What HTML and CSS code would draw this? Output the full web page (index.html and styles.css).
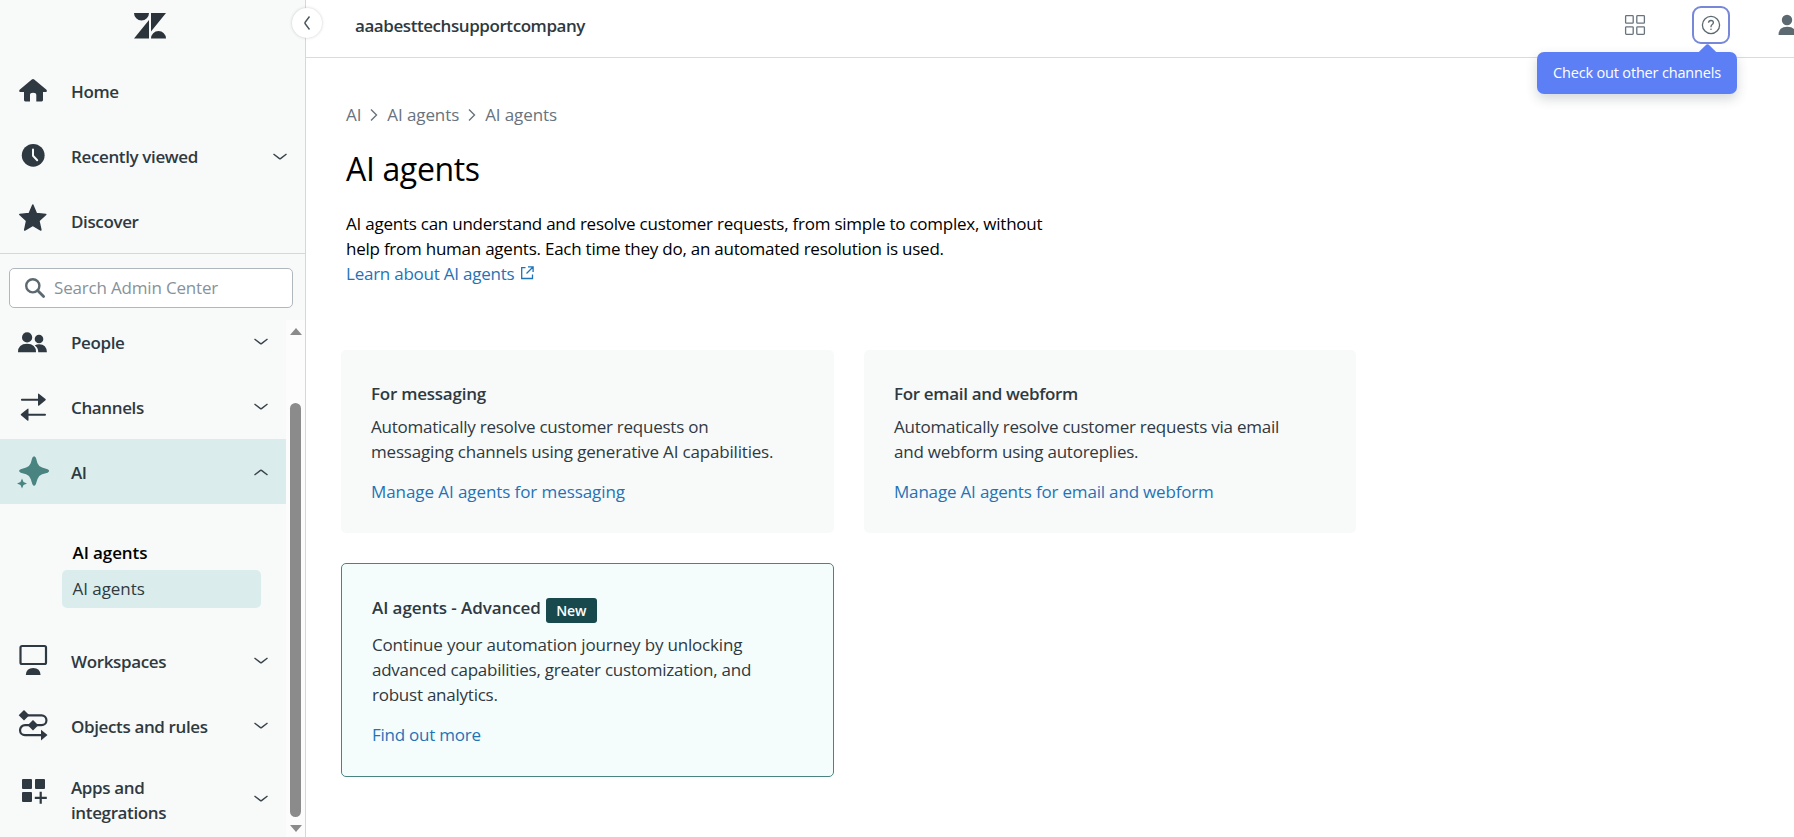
FILE: index.html
```html
<!DOCTYPE html>
<html lang="en">
<head>
<meta charset="utf-8">
<title>AI agents</title>
<link rel="stylesheet" href="styles.css">
</head>
<body>
<div class="app">
  <aside class="sidebar">
    <div class="brand">
      <svg width="34" height="26" viewBox="0 0 34 26" fill="#2b343a"><path d="M1 0h15a7.5 7.5 0 0 1-15 0zM16 7v18.500H1zM18 0h15L18 18.500zM18 25.500a7.500 7.500 0 0 1 15 0z"/></svg>
    </div>
    <nav class="top-nav">
      <a class="row"><svg class="icon" viewBox="0 0 32 33"><path d="M14.800 4.500q1.200-1 2.400 0l12.300 10.300q1 1.200-.2 2.300H26v8q0 1.400-1.300 1.400H19.300V20q0-2.300-3.200-2.300T13 20v6.500H8.300Q7 26.500 7 25.100v-8H2.800q-1.300-1.100-.2-2.300z"/></svg><span class="label">Home</span></a>
      <a class="row"><svg class="icon" viewBox="0 0 32 33"><circle cx="16.200" cy="15.300" r="11.400"/><path d="M16 9.500v6.300l4.200 4.400" fill="none" stroke="#f8faf9" stroke-width="2" stroke-linecap="round" stroke-linejoin="round"/></svg><span class="label">Recently viewed</span><svg class="chev" viewBox="0 0 16 10"><path d="M1.500 2l6 4.600q.5.400 1 0l6-4.600"/></svg></a>
      <a class="row"><svg class="icon" viewBox="0 0 32 33"><path d="M15.800 0l3.600 8.500 9.400 1-6.900 6.300 2 9.200-8.100-4.700L7.700 25l1.900-9.200-6.800-6.300 9.400-1z" stroke="#2f3941" stroke-width="1.500" stroke-linejoin="round"/></svg><span class="label">Discover</span></a>
    </nav>
    <div class="search">
      <svg width="22" height="22" viewBox="0 0 22 22" fill="none" stroke="#5c6970"><circle cx="8.800" cy="8.800" r="6.600" stroke-width="2.400"/><path d="M13.600 13.600l6 6" stroke-width="2.800" stroke-linecap="round"/></svg>
      <span class="placeholder">Search Admin Center</span>
    </div>
    <div class="scroller">
      <nav class="nav">
        <a class="row row-low"><svg class="icon" viewBox="0 0 32 33"><circle cx="10.100" cy="12.400" r="5.100"/><circle cx="22" cy="14" r="4.300"/><path d="M1 27.300q0-8.500 9-8.500t9 8.500zM17.700 20.500q2-1.200 4.500-1.200 7.400 0 7.700 8H21.300q0-4.500-3.600-6.800z"/></svg><span class="label">People</span><svg class="chev" viewBox="0 0 16 10"><path d="M1.500 2l6 4.600q.5.400 1 0l6-4.600"/></svg></a>
        <a class="row row-low"><svg class="icon" viewBox="0 0 32 33"><path d="M4.900 9.700H23M28 24.700H10" fill="none" stroke="#2f3941" stroke-width="2" stroke-linecap="round"/><path d="M21 4.300q0-1.300 1.200-.4l6.300 5.200q.6.600 0 1.200l-6.300 5.200q-1.200.900-1.200-.4zM11.500 19.300q0-1.300-1.200-.4L4 24.100q-.6.600 0 1.200l6.300 5.200q1.200.900 1.200-.4z"/></svg><span class="label">Channels</span><svg class="chev" viewBox="0 0 16 10"><path d="M1.500 2l6 4.600q.5.400 1 0l6-4.600"/></svg></a>
        <a class="row row-low row-active"><svg class="icon icon-ai" viewBox="0 0 32 33"><path d="M15.300 2.800q1.800-3.200 3.600 0l1.600 5.400q1.300 3.300 4.600 4.400l5.500 1.700q3 1.700 0 3.400l-5.500 1.600q-3.300 1.200-4.600 4.600l-1.700 5.400q-1.700 3-3.400 0l-1.700-5.400q-1.200-3.400-4.600-4.600l-5.400-1.600q-3.200-1.700 0-3.400l5.400-1.700q3.400-1.200 4.600-4.400zM5 23.500l1.500 3.500 3.500 1.500L6.500 30 5 33.500 3.500 30 0 28.500 3.500 27z"/></svg><span class="label">AI</span><svg class="chev" viewBox="0 0 16 10"><path d="M1.500 8l6-4.600q.5-.4 1 0l6 4.600"/></svg></a>
        <div class="subnav">
          <div class="sub-title">AI agents</div>
          <div class="sub-item">AI agents</div>
        </div>
        <a class="row row-low"><svg class="icon" viewBox="0 0 32 33"><rect x="3.500" y="2" width="25.500" height="18" rx="1.500" fill="none" stroke="#2f3941" stroke-width="2.200"/><path d="M8.800 31q.4-7 7.400-7t7.400 7z"/></svg><span class="label">Workspaces</span><svg class="chev" viewBox="0 0 16 10"><path d="M1.500 2l6 4.600q.5.400 1 0l6-4.600"/></svg></a>
        <a class="row row-low"><svg class="icon" viewBox="0 0 32 33"><path d="M7 6.300h17.500a4.900 4.900 0 0 1 0 9.900H8a4.900 4.900 0 0 0 0 9.900h16" fill="none" stroke="#2f3941" stroke-width="2.200"/><path d="M7 1l5.300 5.300L7 11.600 1.700 6.300zM16 10.900l5.300 5.300-5.300 5.300-5.300-5.300zM24 20.800l6.500 5.300-6.500 5.300z"/></svg><span class="label">Objects and rules</span><svg class="chev" viewBox="0 0 16 10"><path d="M1.500 2l6 4.600q.5.400 1 0l6-4.600"/></svg></a>
        <a class="row row-tall"><svg class="icon" viewBox="0 0 32 33"><rect x="5" y="5" width="10" height="10" rx="1"/><rect x="18" y="5" width="10" height="10" rx="1"/><rect x="5" y="18" width="10" height="10" rx="1"/><path d="M23.700 17.800v12M17.800 23.800h12" fill="none" stroke="#2f3941" stroke-width="2.200"/></svg><span class="label">Apps and<br>integrations</span><svg class="chev" viewBox="0 0 16 10"><path d="M1.500 2l6 4.600q.5.400 1 0l6-4.600"/></svg></a>
      </nav>
      <div class="scrollbar"><i class="arrow-up"></i><i class="thumb"></i><i class="arrow-down"></i></div>
    </div>
    <div class="collapse"><svg width="10" height="16" viewBox="0 0 10 16"><path d="M7.500 1.500L3 7.500q-.3.500 0 1l4.500 6" fill="none" stroke="#49545c" stroke-width="1.400"/></svg></div>
  </aside>
  <main class="main">
    <header class="header">
      <span class="account">aaabesttechsupportcompany</span>
      <div class="tools">
        <svg class="grid" width="22" height="22" viewBox="0 0 22 22" fill="none" stroke="#68737d" stroke-width="1.300"><rect x="1.600" y="1.600" width="7.600" height="7.600" rx=".8"/><rect x="12.800" y="1.600" width="7.600" height="7.600" rx=".8"/><rect x="1.600" y="12.800" width="7.600" height="7.600" rx=".8"/><rect x="12.800" y="12.800" width="7.600" height="7.600" rx=".8"/></svg>
        <div class="help">
          <svg width="20" height="20" viewBox="0 0 20 20" fill="none" stroke="#5c6970" stroke-width="1.300"><circle cx="10" cy="10" r="8.600"/><path d="M7.500 7.800q.2-2.300 2.500-2.300t2.400 2.100q0 1.200-1.200 1.900T10 11.700v.5" stroke-width="1.300"/><circle cx="10" cy="14.200" r=".8" fill="#5c6970" stroke="none"/></svg>
          <div class="tooltip">Check out other channels</div>
        </div>
        <svg class="user" width="17" height="22" viewBox="0 0 17 22" fill="#5c6970"><circle cx="10" cy="6" r="5.200"/><path d="M1.500 21q0-8.300 8.700-8.300T19 21z"/></svg>
      </div>
    </header>
    <section class="content">
      <div class="crumbs"><span>AI</span><svg viewBox="0 0 8 14"><path d="M1 1.500L6.500 7 1 12.500"/></svg><span>AI agents</span><svg viewBox="0 0 8 14"><path d="M1 1.500L6.500 7 1 12.500"/></svg><span>AI agents</span></div>
      <h1>AI agents</h1>
      <p class="intro">AI agents can understand and resolve customer requests, from simple to complex, without<br>help from human agents. Each time they do, an automated resolution is used.<br><a class="link">Learn about AI agents</a><svg class="ext" viewBox="0 0 14 14"><path d="M5.500 1.700H1.700v10.800h10.800V8.500M8 .900h5.100V6M13 1L6.500 7.500"/></svg></p>
      <div class="cards">
        <article class="card">
          <h2>For messaging</h2>
          <p>Automatically resolve customer requests on<br><span class="loose">messaging channels using generative AI capabilities.</span></p>
          <a class="link looser">Manage AI agents for messaging</a>
        </article>
        <article class="card">
          <h2 class="tight">For email and webform</h2>
          <p>Automatically resolve customer requests via email<br>and webform using autoreplies.</p>
          <a class="link loose">Manage AI agents for email and webform</a>
        </article>
        <article class="card card-adv">
          <h2 class="looser">AI agents - Advanced<span class="badge">New</span></h2>
          <p><span class="loose">Continue your automation journey by unlocking</span><br>advanced capabilities, greater customization, and<br>robust analytics.</p>
          <a class="link">Find out more</a>
        </article>
      </div>
    </section>
  </main>
</div>
</body>
</html>
```

FILE: styles.css
```css
* { box-sizing: border-box; }
body {
  margin: 0;
  background: #fff;
  color: #2f3941;
  font-family: "Open Sans", "Noto Sans", sans-serif;
  font-size: 17px;
  line-height: 25px;
  white-space: nowrap;
}
.app { display: flex; width: 1794px; height: 837px; overflow: hidden; }
h1, h2, p { margin: 0; font-weight: 400; }

.sidebar {
  position: relative;
  flex: none;
  display: flex;
  flex-direction: column;
  width: 306px;
  background: #f8faf9;
  border-right: 1px solid #d3d8da;
}
.brand { flex: none; height: 59px; padding: 12.5px 0 0 133px; }
.brand svg { display: block; }
.top-nav { flex: none; height: 195px; border-bottom: 1px solid #d3d8da; }
.row { display: flex; align-items: center; height: 65px; padding-left: 17px; }
.icon { flex: none; width: 32px; height: 33px; margin-right: 22px; fill: #2f3941; overflow: visible; }
.icon-ai { fill: #4a8481; }
.label { flex: 1; font-weight: 600; letter-spacing: -.37px; }
.row-low .label { padding-top: 2px; }
.chev { flex: none; width: 16px; height: 10px; margin-right: 17px; fill: none; stroke: #39434b; stroke-width: 1.4; }
.search {
  flex: none;
  display: flex;
  align-items: center;
  gap: 8px;
  width: 284px;
  height: 40px;
  margin: 14px 0 0 9px;
  padding-left: 14px;
  background: #fff;
  border: 1px solid #b0b8be;
  border-radius: 5px;
  color: #87929a;
  letter-spacing: -.18px;
}
.placeholder { padding-bottom: 1px; }
.scroller { flex: none; display: flex; height: 517px; margin-top: 12px; overflow: hidden; }
.nav { flex: none; width: 286px; margin-top: -11px; }
.row-active { background: #daedec; }
.row-tall { height: 84px; }
.row-tall .icon { align-self: flex-start; margin-top: 16px; }
.row-tall .chev { margin-bottom: 3px; }
.subnav { height: 124px; padding: 36px 25px 0 62px; }
.sub-title { padding-left: 10.5px; color: #000; font-weight: 600; height: 30px; letter-spacing: -.1px; }
.sub-item { height: 38px; padding: 6px 10.5px; border-radius: 5px; background: #daedec; letter-spacing: -.05px; }
.scrollbar { flex: none; display: flex; flex-direction: column; align-items: center; width: 19px; background: #fcfcfc; }
.arrow-up { margin-top: 8px; border: 6.5px solid transparent; border-top: 0; border-bottom: 7px solid #8b8b8b; }
.thumb { width: 11px; height: 414px; margin-top: 68px; border-radius: 6px; background: #8b8b8b; }
.arrow-down { margin-top: 8px; border: 6.5px solid transparent; border-bottom: 0; border-top: 7px solid #8b8b8b; }
.collapse {
  position: absolute;
  left: 292px;
  top: 8px;
  z-index: 2;
  display: flex;
  align-items: center;
  justify-content: center;
  width: 30px;
  height: 30px;
  border-radius: 50%;
  background: #fff;
  box-shadow: 0 0 3px rgba(47, 57, 65, .25);
}

.main { flex: 1; min-width: 0; }
.header { display: flex; justify-content: space-between; height: 58px; border-bottom: 1px solid #d8dcde; padding-left: 49px; }
.account { margin-top: 13px; font-weight: 600; letter-spacing: -.43px; }
.tools { display: flex; }
.grid { margin: 14px 46px 0 0; }
.help {
  position: relative;
  display: flex;
  align-items: center;
  justify-content: center;
  width: 38px;
  height: 38px;
  margin: 6px 47px 0 0;
  border: 2px solid #7788d8;
  border-radius: 9px;
}
.tooltip {
  position: absolute;
  right: -9px;
  top: 44px;
  width: 200px;
  height: 42px;
  padding: 8px 16px;
  border-radius: 7px;
  background: #5c7ff6;
  color: #fff;
  font-size: 14.5px;
  letter-spacing: -.17px;
  box-shadow: 0 5px 12px rgba(47, 57, 65, .2);
}
.tooltip::before {
  content: "";
  position: absolute;
  left: 164px;
  top: -6px;
  width: 13px;
  height: 13px;
  border-radius: 3px 0 0 0;
  background: #5c7ff6;
  transform: rotate(45deg);
}
.user { margin-top: 14px; }

.content { padding: 44px 0 0 35px; color: #000; letter-spacing: -.24px; }
.crumbs { display: flex; align-items: center; height: 25px; color: #68737d; margin-left: 5px; letter-spacing: -.1px; }
.crumbs svg { width: 8px; height: 14px; margin: 0 9px; fill: none; stroke: #68737d; stroke-width: 1.4; }
h1 { margin: 19px 0 0 5px; font-size: 32px; line-height: 45px; letter-spacing: -.35px; }
.intro { margin: 20px 0 0 5px; }
.link { color: #1f73b7; }
.ext { width: 14px; height: 14px; margin-left: 6px; fill: none; stroke: #1f73b7; stroke-width: 1.3; }
.cards { display: grid; grid-template-columns: 493px 492px; gap: 30px; margin-top: 64px; align-items: start; color: #2f3941; }
.card { height: 183px; padding: 31px 30px; border-radius: 5px; background: #f8faf9; }
.card h2 { display: flex; height: 25px; font-size: 17px; line-height: 25px; font-weight: 600; }
.card p { margin: 8px 0 15px; }
.card .link { display: block; width: max-content; }
.card .loose { letter-spacing: -.18px; }
.card .looser { letter-spacing: -.08px; }
.card .tight { letter-spacing: -.33px; }
.card-adv { height: 214px; border: 1px solid #4a8481; background: #f5fdfc; }
.card-adv h2 { height: 29px; }
.badge { width: 51px; height: 25px; margin: 3px 0 0 5px; border-radius: 3px; background: #17494d; color: #fff; font-size: 14px; text-align: center; }
```
